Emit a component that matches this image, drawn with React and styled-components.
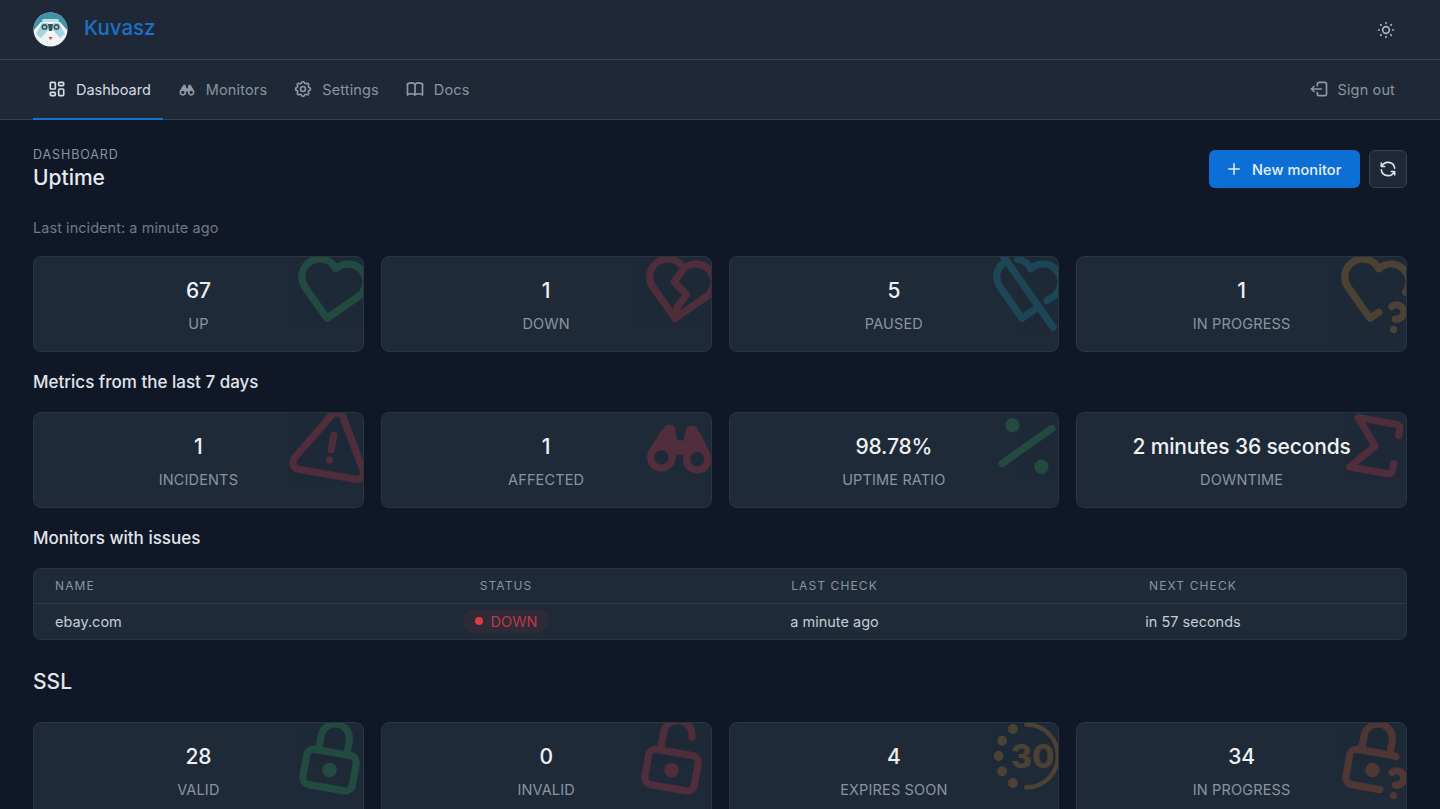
import React from 'react';
import styled, { createGlobalStyle } from 'styled-components';
import {
  TbLayoutDashboard, TbBinocularsFilled, TbSettings, TbBook, TbLogout2, TbSun, TbPlus, TbRefresh,
  TbHeart, TbHeartBroken, TbHeartOff, TbHeartQuestion, TbAlertTriangle, TbPercentage, TbSum,
  TbLock, TbLockOpen, TbLockQuestion,
} from 'react-icons/tb';

const GlobalStyle = createGlobalStyle`
  html { overflow: hidden; }
  body {
    margin: 0;
    background: #101828;
    color: #e6eaef;
    font-family: Inter, "Liberation Sans", sans-serif;
  }
`;

const TopBar = styled.header`
  height: 58px;
  display: flex;
  align-items: center;
  justify-content: space-between;
  padding: 0 33px 1px;
  background: #1e2836;
  border-bottom: 1px solid #364150;
`;

const Brand = styled.div`
  display: flex;
  align-items: center;
  gap: 16px;
  font-size: 20.5px;
  font-weight: 500;
  color: #1c70c8;
`;

const BrandName = styled.span`
  padding-bottom: 3px;
`;

const IconButton = styled.span`
  display: flex;
  margin: 1px 11px 0 0;
  color: #aab3bd;
  font-size: 20px;
`;

const NavBar = styled.nav`
  height: 59px;
  display: flex;
  justify-content: space-between;
  padding: 0 33px;
  background: #1e2836;
  border-bottom: 1px solid #364150;
`;

const NavGroup = styled.div`
  display: flex;
`;

const NavItem = styled.a`
  display: flex;
  align-items: center;
  gap: 9px;
  padding: 0 12px 0 14px;
  height: 60px;
  box-sizing: border-box;
  font-size: 14.5px;
  letter-spacing: ${(p) => (p.$active ? '0' : '0.14px')};
  color: ${(p) => (p.$active ? '#d5dbe2' : '#8a94a1')};
  border-bottom: 2px solid ${(p) => (p.$active ? '#1c70c8' : 'transparent')};
  svg { font-size: 20px; color: ${(p) => (p.$active ? '#d5dbe2' : '#8f99a5')}; }
`;

const Main = styled.main`
  padding: 30px 33px 0;
`;

const TitleRow = styled.div`
  display: flex;
  justify-content: space-between;
  align-items: flex-start;
`;

const Eyebrow = styled.div`
  font-size: 12.5px;
  line-height: 10px;
  letter-spacing: 0.9px;
  color: #8a94a1;
`;

const PageTitle = styled.h1`
  margin: 1px 0 0;
  font-size: 21px;
  line-height: 34px;
  font-weight: 500;
  color: #e6eaef;
`;

const Actions = styled.div`
  display: flex;
  gap: 9px;
`;

const PrimaryButton = styled.button`
  display: flex;
  align-items: center;
  gap: 9px;
  height: 38px;
  width: 151px;
  padding: 0 16px;
  border: 0;
  border-radius: 6px;
  background: #0b6fd6;
  color: #e8f1fb;
  font: 500 14.5px Inter, "Liberation Sans", sans-serif;
  letter-spacing: 0.1px;
  white-space: nowrap;
  svg { font-size: 18px; flex: none; }
`;

const RefreshButton = styled.button`
  display: flex;
  align-items: center;
  justify-content: center;
  width: 38px;
  height: 38px;
  padding: 0;
  border: 1px solid #374250;
  border-radius: 6px;
  background: #1e2836;
  color: #dde2e8;
  font-size: 20px;
`;

const Muted = styled.p`
  margin: 23px 0 0;
  font-size: 14.5px;
  line-height: 20px;
  letter-spacing: 0.05px;
  color: #6e7986;
`;

const CardGrid = styled.div`
  display: grid;
  grid-template-columns: repeat(4, minmax(0, 1fr));
  gap: 17px;
  margin-top: ${(p) => p.$top}px;
`;

const Card = styled.div`
  position: relative;
  height: 96px;
  box-sizing: border-box;
  overflow: hidden;
  display: flex;
  flex-direction: column;
  align-items: center;
  padding-top: 20px;
  border: 1px solid #2a3542;
  border-radius: 8px;
  background: #1f2a38;
`;

const Value = styled.div`
  position: relative;
  font-size: 21px;
  line-height: 28px;
  font-weight: 500;
  letter-spacing: -0.15px;
  color: #eef1f4;
`;

const Label = styled.div`
  position: relative;
  margin-top: 9px;
  font-size: 14.5px;
  line-height: 20px;
  letter-spacing: 0.15px;
  color: #8a94a1;
`;

const Watermark = styled.span`
  position: absolute;
  top: ${(p) => p.$top ?? -10}px;
  right: ${(p) => p.$right ?? -12}px;
  display: flex;
  font-size: ${(p) => p.$size ?? 86}px;
  color: ${(p) => p.$color};
  opacity: 0.24;
  transform: rotate(${(p) => p.$rotate ?? 10}deg);
`;

const Section = styled.h2`
  margin: ${(p) => p.$top}px 0 0;
  font-size: ${(p) => p.$size}px;
  line-height: 24px;
  font-weight: 500;
  color: #e1e5ea;
`;

const TableWrap = styled.div`
  margin-top: 18px;
  border: 1px solid #2a3542;
  border-radius: 8px;
  background: #1f2a38;
  overflow: hidden;
`;

const Table = styled.table`
  width: 100%;
  border-collapse: collapse;
  table-layout: fixed;
`;

const Th = styled.th`
  width: ${(p) => p.$width}px;
  height: 34px;
  padding: 0 0 0 ${(p) => (p.$left ? '21px' : '0')};
  box-sizing: border-box;
  text-align: ${(p) => (p.$left ? 'left' : 'center')};
  font-size: 12px;
  font-weight: 400;
  letter-spacing: 1.1px;
  color: #8a94a1;
  border-bottom: 1px solid #2f3a47;
`;

const Td = styled.td`
  height: 35px;
  padding: 0 0 0 ${(p) => (p.$left ? '21px' : '0')};
  text-align: ${(p) => (p.$left ? 'left' : 'center')};
  font-size: 14.5px;
  color: #c6ccd4;
`;

const Badge = styled.span`
  display: inline-flex;
  align-items: center;
  gap: 8px;
  height: 24px;
  padding: 0 12px;
  border-radius: 12px;
  background: #2f2a37;
  color: #b93a47;
  font-size: 14.5px;
`;

const Dot = styled.i`
  width: 8px;
  height: 8px;
  border-radius: 50%;
  background: #e0393f;
`;

const green = '#34b35c';
const red = '#ea3b46';
const teal = '#18a4b4';
const amber = '#d8912a';
const orange = '#e8622a';

function Logo() {
  return (
    <svg width="35" height="35" viewBox="0 0 35 35">
      <defs>
        <clipPath id="logoClip"><circle cx="17.5" cy="17.5" r="17" /></clipPath>
      </defs>
      <g clipPath="url(#logoClip)">
        <rect width="35" height="35" fill="#eef3f4" />
        <path d="M0 0 H35 V19 L27 10 H8 L0 19 Z" fill="#3f92a8" />
        <rect x="9" y="7" width="17" height="3" rx="1.5" fill="#bfe0e6" />
        <path d="M3 22 L9 11 H15 L16 17 L8 26 Z" fill="#a9d3db" />
        <path d="M32 22 L26 11 H20 L19 17 L27 26 Z" fill="#a9d3db" />
        <circle cx="11.5" cy="15" r="3" fill="#35505f" />
        <circle cx="23.5" cy="15" r="3" fill="#35505f" />
        <circle cx="11.5" cy="15" r="1.5" fill="#8fd0da" />
        <circle cx="23.5" cy="15" r="1.5" fill="#8fd0da" />
        <path d="M15 12 H20 L19 19 H16 Z" fill="#35505f" />
        <path d="M15.5 19 H19.5 L17.5 22.5 Z" fill="#ffffff" />
        <path d="M15.5 25 H19.5 L17.5 28 Z" fill="#d8492f" />
      </g>
    </svg>
  );
}

function Expires() {
  return (
    <svg width="1em" height="1em" viewBox="0 0 80 80" fill="none" stroke="currentColor" strokeWidth="5" strokeLinecap="round">
      <path d="M36 5 A35 35 0 1 1 36 75" />
      <circle cx="21" cy="10" r="3" fill="currentColor" />
      <circle cx="9" cy="23" r="3" fill="currentColor" />
      <circle cx="5" cy="40" r="3" fill="currentColor" />
      <circle cx="9" cy="57" r="3" fill="currentColor" />
      <circle cx="21" cy="70" r="3" fill="currentColor" />
      <text x="43" y="53" textAnchor="middle" fontFamily="Inter, sans-serif" fontSize="36" fontWeight="800" fill="currentColor" stroke="none">30</text>
    </svg>
  );
}

function StatCard({ value, label, icon: Icon, color, ...mark }) {
  return (
    <Card>
      <Watermark $color={color} {...mark}><Icon /></Watermark>
      <Value>{value}</Value>
      <Label>{label}</Label>
    </Card>
  );
}

const nav = [
  { label: 'Dashboard', icon: TbLayoutDashboard, active: true },
  { label: 'Monitors', icon: TbBinocularsFilled },
  { label: 'Settings', icon: TbSettings },
  { label: 'Docs', icon: TbBook },
];

const uptime = [
  { value: '67', label: 'UP', icon: TbHeart, color: green },
  { value: '1', label: 'DOWN', icon: TbHeartBroken, color: red },
  { value: '5', label: 'PAUSED', icon: TbHeartOff, color: teal },
  { value: '1', label: 'IN PROGRESS', icon: TbHeartQuestion, color: amber },
];

const metrics = [
  { value: '1', label: 'INCIDENTS', icon: TbAlertTriangle, color: red },
  { value: '1', label: 'AFFECTED', icon: TbBinocularsFilled, color: red, $rotate: 3, $top: -12 },
  { value: '98.78%', label: 'UPTIME RATIO', icon: TbPercentage, color: green },
  { value: '2 minutes 36 seconds', label: 'DOWNTIME', icon: TbSum, color: red },
];

const ssl = [
  { value: '28', label: 'VALID', icon: TbLock, color: green },
  { value: '0', label: 'INVALID', icon: TbLockOpen, color: red, $right: -6 },
  { value: '4', label: 'EXPIRES SOON', icon: Expires, color: amber, $rotate: 0, $size: 72, $top: -3, $right: -8 },
  { value: '34', label: 'IN PROGRESS', icon: TbLockQuestion, color: orange },
];

export default function App() {
  return (
    <>
      <GlobalStyle />
      <TopBar>
        <Brand><Logo /><BrandName>Kuvasz</BrandName></Brand>
        <IconButton><TbSun /></IconButton>
      </TopBar>
      <NavBar>
        <NavGroup>
          {nav.map(({ label, icon: Icon, active }) => (
            <NavItem key={label} $active={active}><Icon />{label}</NavItem>
          ))}
        </NavGroup>
        <NavItem><TbLogout2 />Sign out</NavItem>
      </NavBar>
      <Main>
        <TitleRow>
          <div>
            <Eyebrow>DASHBOARD</Eyebrow>
            <PageTitle>Uptime</PageTitle>
          </div>
          <Actions>
            <PrimaryButton><TbPlus />New monitor</PrimaryButton>
            <RefreshButton><TbRefresh /></RefreshButton>
          </Actions>
        </TitleRow>
        <Muted>Last incident: a minute ago</Muted>
        <CardGrid $top={18}>
          {uptime.map((c) => <StatCard key={c.label} {...c} />)}
        </CardGrid>
        <Section $top={18} $size={17}>Metrics from the last 7 days</Section>
        <CardGrid $top={18}>
          {metrics.map((c) => <StatCard key={c.label} {...c} />)}
        </CardGrid>
        <Section $top={18} $size={17}>Monitors with issues</Section>
        <TableWrap>
          <Table>
            <thead>
              <tr>
                <Th $left $width={289}>NAME</Th>
                <Th $width={366}>STATUS</Th>
                <Th $width={291}>LAST CHECK</Th>
                <Th $width={426}>NEXT CHECK</Th>
              </tr>
            </thead>
            <tbody>
              <tr>
                <Td $left>ebay.com</Td>
                <Td><Badge><Dot />DOWN</Badge></Td>
                <Td>a minute ago</Td>
                <Td>in 57 seconds</Td>
              </tr>
            </tbody>
          </Table>
        </TableWrap>
        <Section $top={30} $size={21}>SSL</Section>
        <CardGrid $top={28}>
          {ssl.map((c) => <StatCard key={c.label} {...c} />)}
        </CardGrid>
      </Main>
    </>
  );
}
